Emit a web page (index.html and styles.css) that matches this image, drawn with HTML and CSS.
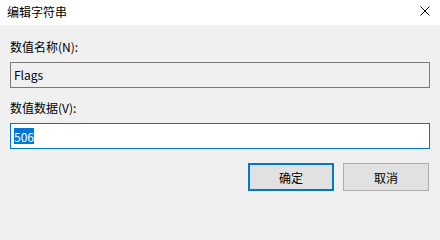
FILE: index.html
```html
<!DOCTYPE html>
<html lang="zh-CN">
<head>
<meta charset="utf-8">
<title>编辑字符串</title>
<link rel="stylesheet" href="styles.css">
</head>
<body>
<div class="dialog">
  <div class="titlebar">
    <span class="title">编辑字符串</span>
    <span class="close">
      <svg width="10" height="10" viewBox="0 0 10 10"><path d="M0.5 0.5 L9.5 9.5 M9.5 0.5 L0.5 9.5" stroke="#000" stroke-width="1" fill="none"/></svg>
    </span>
  </div>
  <div class="content">
    <div class="label">数值名称(N):</div>
    <div class="field readonly">Flags</div>
    <div class="label second">数值数据(V):</div>
    <div class="field active"><span class="sel">506</span></div>
    <div class="buttons">
      <div class="btn default">确定</div>
      <div class="btn">取消</div>
    </div>
  </div>
</div>
</body>
</html>
```

FILE: styles.css
```css
html, body {
  margin: 0;
  padding: 0;
}
body {
  width: 440px;
  height: 204px;
  background: #f0f0f0;
  font-family: "Noto Sans CJK SC", "Noto Sans", sans-serif;
  font-size: 12px;
  color: #000;
  overflow: hidden;
}
.dialog {
  display: flex;
  flex-direction: column;
  height: 204px;
}
.titlebar {
  height: 25px;
  background: #fff;
  display: flex;
  align-items: center;
  justify-content: space-between;
  padding: 0 10px 0 7px;
  box-sizing: border-box;
}
.title {
  line-height: 16px;
  margin-top: -1px;
}
.close {
  display: flex;
  width: 10px;
  height: 10px;
  margin-top: -4px;
}
.content {
  padding: 14px 10px 0 10px;
  display: flex;
  flex-direction: column;
}
.label {
  line-height: 16px;
  height: 16px;
  margin-bottom: 7px;
}
.label.second {
  margin-top: 12px;
}
.field {
  height: 26px;
  box-sizing: border-box;
  border: 1px solid #7a7a7a;
  padding: 0 3px;
  display: flex;
  align-items: center;
  line-height: 16px;
}
.field.readonly {
  background: #f0f0f0;
}
.field.active {
  background: #fff;
  border-color: #0078d7;
}
.sel {
  background: #0078d7;
  color: #fff;
  line-height: 15px;
  padding-top: 1px;
}
.buttons {
  display: flex;
  justify-content: flex-end;
  gap: 9px;
  margin-top: 14px;
  padding-right: 1px;
}
.btn {
  width: 86px;
  height: 28px;
  box-sizing: border-box;
  border: 1px solid #adadad;
  background: #e1e1e1;
  display: flex;
  align-items: center;
  justify-content: center;
}
.btn.default {
  border: 2px solid #0078d7;
}
```
